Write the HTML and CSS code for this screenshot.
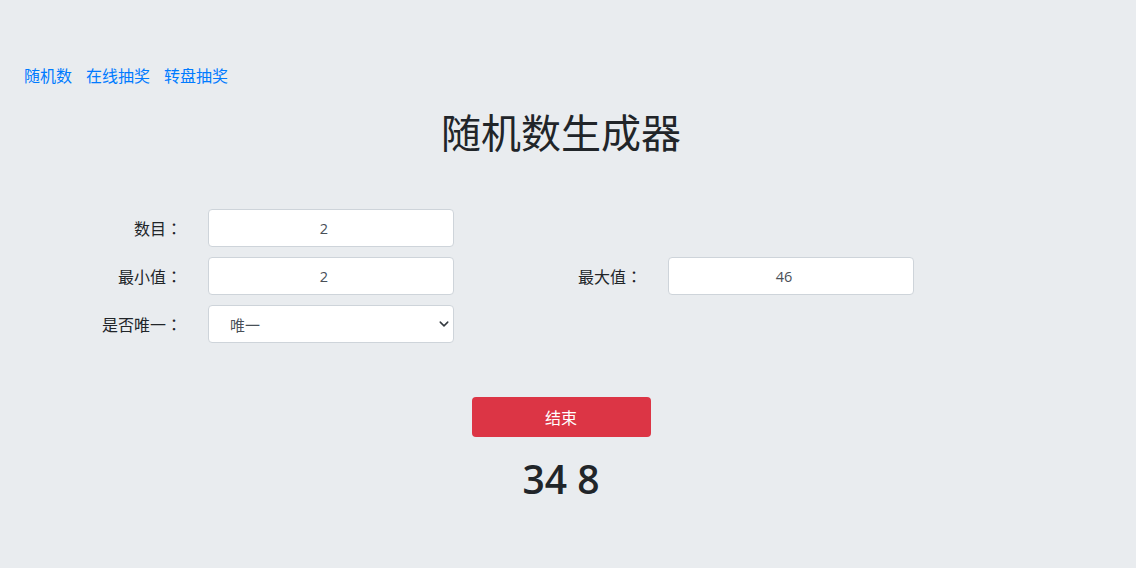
FILE: index.html
```html
<!DOCTYPE html>
<html lang="zh-CN">
<head>
<meta charset="utf-8">
<title>随机数生成器</title>
<link rel="stylesheet" href="styles.css">
</head>
<body>
<div class="page">
  <nav class="nav">
    <a href="#">随机数</a>
    <a href="#">在线抽奖</a>
    <a href="#">转盘抽奖</a>
  </nav>
  <h1 class="title">随机数生成器</h1>
  <form class="form">
    <div class="row">
      <label class="label">数目<span class="colon" lang="zh-TW">：</span></label>
      <div class="field"><input class="input" type="text" value="2"></div>
    </div>
    <div class="row">
      <label class="label">最小值<span class="colon" lang="zh-TW">：</span></label>
      <div class="field"><input class="input" type="text" value="2"></div>
      <label class="label">最大值<span class="colon" lang="zh-TW">：</span></label>
      <div class="field"><input class="input" type="text" value="46"></div>
    </div>
    <div class="row">
      <label class="label">是否唯一<span class="colon" lang="zh-TW">：</span></label>
      <div class="field">
        <div class="select">
          <span>唯一</span>
          <svg class="chev" viewBox="0 0 16 16" width="10" height="10"><path d="M2 5l6 6 6-6" fill="none" stroke="#343a40" stroke-width="2.4" stroke-linecap="round" stroke-linejoin="round"/></svg>
        </div>
      </div>
    </div>
  </form>
  <div class="actions">
    <button class="btn" type="button">结束</button>
  </div>
  <div class="result">34 8</div>
</div>
</body>
</html>
```

FILE: styles.css
```css
html, body {
  margin: 0;
  padding: 0;
  background: #e9ecef;
}
body {
  font-family: "Open Sans", "Noto Sans CJK SC", sans-serif;
  color: #212529;
  height: 568px;
  overflow: hidden;
}
.page {
  width: 1104px;
  margin-left: 9px;
  padding-top: 63px;
}
.nav {
  display: flex;
  gap: 14px;
  padding-left: 15px;
  height: 24px;
  align-items: center;
}
.nav a {
  color: #007bff;
  text-decoration: none;
  font-size: 16px;
  font-family: "Noto Sans CJK SC", sans-serif;
}
.title {
  margin: 18px 0 0;
  text-align: center;
  font-family: "Noto Sans CJK SC", sans-serif;
  font-weight: 400;
  font-size: 40px;
  line-height: 52px;
}
.form {
  margin-top: 52px;
  display: flex;
  flex-direction: column;
  gap: 10px;
}
.row {
  display: grid;
  grid-template-columns: 184px 276px 184px 276px;
  height: 38px;
  align-items: center;
}
.label {
  text-align: right;
  padding-right: 11px;
  font-family: "Noto Sans CJK SC", sans-serif;
  font-size: 16px;
  color: #212529;
}
.colon {
  font-family: "Noto Sans CJK TC", sans-serif;
}
.field {
  padding: 0 15px;
}
.input {
  box-sizing: border-box;
  width: 246px;
  height: 38px;
  border: 1px solid #ced4da;
  border-radius: 4px;
  background: #fff;
  text-align: center;
  padding: 0 14px 0 0;
  font-family: "Open Sans", "Noto Sans CJK SC", sans-serif;
  font-size: 14.5px;
  color: #495057;
  outline: none;
}
.select {
  box-sizing: border-box;
  width: 246px;
  height: 38px;
  border: 1px solid #ced4da;
  border-radius: 4px;
  background: #fff;
  display: flex;
  align-items: center;
  justify-content: space-between;
  padding: 0 4px 0 21px;
  font-family: "Noto Sans CJK SC", sans-serif;
  font-size: 15px;
  color: #495057;
}
.chev {
  display: block;
}
.actions {
  margin-top: 54px;
  display: flex;
  justify-content: center;
}
.btn {
  width: 179px;
  height: 40px;
  border: none;
  border-radius: 4px;
  background: #dc3545;
  color: #fff;
  font-family: "Noto Sans CJK SC", sans-serif;
  font-size: 16px;
  cursor: pointer;
}
.result {
  margin-top: 18px;
  text-align: center;
  font-family: "Open Sans", sans-serif;
  font-weight: 600;
  font-size: 39px;
  line-height: 48px;
  color: #212529;
}
```
